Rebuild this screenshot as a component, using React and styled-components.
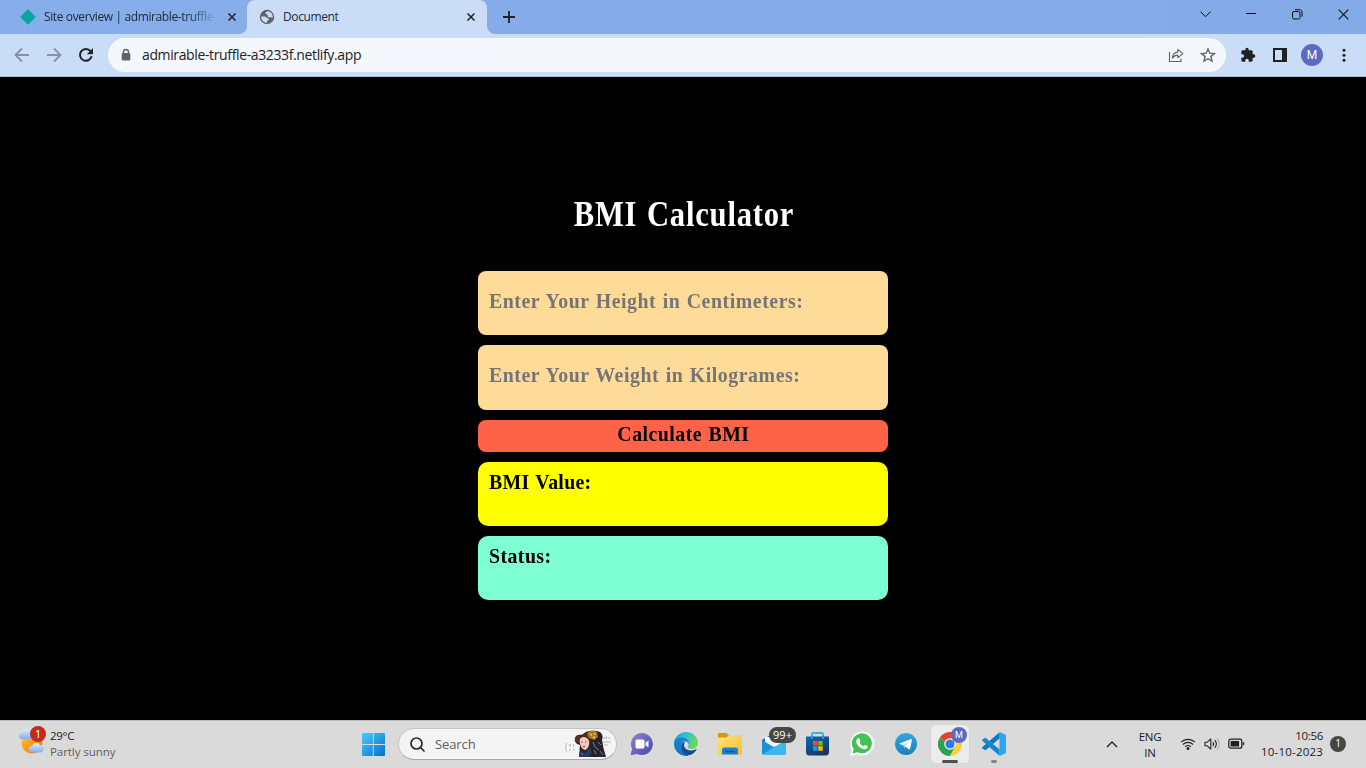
import React from "react";
import styled, { createGlobalStyle } from "styled-components";

const Global = createGlobalStyle`
  * { box-sizing: border-box; }
  html, body { margin: 0; padding: 0; }
  body { background: #000; overflow: hidden; font-family: "Open Sans", "Noto Sans", sans-serif; }
  svg { display: block; flex: none; }
`;

const Screen = styled.div`
  display: flex;
  flex-direction: column;
  width: 1366px;
  height: 768px;
  background: #000;
`;

/* Browser window */
const TabStrip = styled.header`
  display: flex;
  height: 34px;
  flex: none;
  background: linear-gradient(90deg, #87adea, #84aae7);
`;

const Tab = styled.div`
  display: flex;
  align-items: center;
  position: relative;
  width: ${(p) => (p.$active ? 240 : 247)}px;
  height: 34px;
  padding: 0 ${(p) => (p.$active ? 12 : 11)}px 0 ${(p) => (p.$active ? 12 : 20)}px;
  background: ${(p) => (p.$active ? "#cbdcf6" : "transparent")};
  border-radius: 8px 8px 0 0;
  &::before, &::after {
    content: "";
    display: ${(p) => (p.$active ? "block" : "none")};
    position: absolute;
    bottom: 0;
    width: 8px;
    height: 8px;
  }
  &::before { left: -8px; background: radial-gradient(circle at 0 0, transparent 7.6px, #cbdcf6 8.2px); }
  &::after { right: -8px; background: radial-gradient(circle at 100% 0, transparent 7.6px, #cbdcf6 8.2px); }
`;

const TabTitle = styled.span`
  flex: 1;
  margin-left: 8px;
  margin-right: ${(p) => (p.$fade ? 8 : 10)}px;
  white-space: nowrap;
  font-size: 12px;
  line-height: 18px;
  letter-spacing: -0.38px;
  color: #202b3c;
  mask-image: ${(p) => (p.$fade ? "linear-gradient(90deg, #000 145px, transparent 172px)" : "none")};
`;

const NewTab = styled.div`
  padding: 11px 0 0 16px;
`;

const WindowControls = styled.div`
  display: flex;
  align-items: center;
  height: 28px;
  margin-left: auto;
  div { width: 46px; display: flex; justify-content: center; }
`;

const Toolbar = styled.div`
  display: flex;
  align-items: center;
  flex: none;
  height: 43px;
  padding: 0 0 1px 14px;
  background: #cbdcf6;
  border-bottom: 1px solid #a9b9d4;
`;

const NavButtons = styled.div`
  display: flex;
  gap: 16px;
  width: 94px;
`;

const AddressBar = styled.div`
  display: flex;
  align-items: center;
  width: 1118px;
  height: 34px;
  padding: 0 10px 0 12px;
  border-radius: 17px;
  background: #f4f8fd;
`;

const Url = styled.span`
  flex: 1;
  margin-left: 10px;
  font-size: 14px;
  letter-spacing: -0.37px;
  line-height: 20px;
  color: #202124;
`;

const AddressActions = styled.div`
  display: flex;
  gap: 16px;
`;

const Extensions = styled.div`
  display: flex;
  align-items: center;
  gap: 17px;
  margin-left: 14px;
  > :last-child { margin-left: -1px; }
`;

const Avatar = styled.div`
  display: flex;
  align-items: center;
  justify-content: center;
  width: ${(p) => p.$size}px;
  height: ${(p) => p.$size}px;
  margin: 0 -3px;
  border-radius: 50%;
  background: #5c6bc0;
  color: #fff;
  font: ${(p) => (p.$size > 18 ? 12 : 9)}px Roboto, sans-serif;
`;

/* Calculator page */
const Page = styled.main`
  flex: 1;
  display: flex;
  flex-direction: column;
  align-items: center;
  padding-top: 114px;
  background: #000;
`;

const Heading = styled.h1`
  margin: 0 0 32px;
  padding-left: 3px;
  height: 48px;
  font: bold 35px/48px "Liberation Serif", serif;
  letter-spacing: 0.9px;
  word-spacing: 1.5px;
  color: #fff;
  transform: scaleX(0.874);
  white-space: nowrap;
`;

const Form = styled.section`
  display: flex;
  flex-direction: column;
  gap: 10px;
  width: 410px;
`;

const Block = styled.div`
  display: flex;
  justify-content: ${(p) => (p.$center ? "center" : "flex-start")};
  height: ${(p) => p.$height}px;
  padding: ${(p) => p.$top}px 11px 0;
  border-radius: ${(p) => p.$radius}px;
  background: ${(p) => p.$bg};
  color: ${(p) => p.$color || "#000"};
`;

const BlockText = styled.span`
  font: bold 22px/28px "Liberation Serif", serif;
  letter-spacing: ${(p) => p.$spacing || 0.5}px;
  word-spacing: 1px;
  white-space: nowrap;
  transform: scaleX(0.9);
  transform-origin: ${(p) => (p.$center ? "center" : "left")};
`;

/* Taskbar */
const Taskbar = styled.footer`
  display: flex;
  flex: none;
  height: 48px;
  background: #dadada;
  border-top: 1px solid #b9b9b9;
`;

const Weather = styled.div`
  display: flex;
  width: 351px;
  padding: 4px 0 0 18px;
`;

const WeatherIcon = styled.div`
  width: 32px;
`;

const Lines = styled.div`
  margin-top: ${(p) => p.$top || 0}px;
  font-size: 11.5px;
  line-height: 16px;
  letter-spacing: -0.3px;
  text-align: ${(p) => p.$align || "left"};
  color: #1b1b1b;
  white-space: nowrap;
  p { margin: 0; }
  p + p { color: ${(p) => p.$second || "#1b1b1b"}; letter-spacing: ${(p) => p.$ls || -0.3}px; }
`;

const Cell = styled.div`
  position: relative;
  display: flex;
  align-items: center;
  justify-content: center;
  width: 44px;
  height: 46px;
`;

const ActiveTile = styled.div`
  display: flex;
  align-items: center;
  justify-content: center;
  width: 38px;
  height: 38px;
  border-radius: 4px;
  background: #ececec;
  box-shadow: 0 0 1px #aaa;
`;

const RunningMark = styled.i`
  position: absolute;
  bottom: 4px;
  left: ${(p) => (p.$wide ? 14 : 19)}px;
  width: ${(p) => (p.$wide ? 16 : 6)}px;
  height: 3px;
  border-radius: 2px;
  background: ${(p) => (p.$wide ? "#505050" : "#858585")};
`;

const CountBadge = styled.span`
  position: absolute;
  top: 6px;
  left: 17px;
  width: 27px;
  height: 16px;
  border-radius: 8px;
  background: #484644;
  color: #fff;
  font-size: 11px;
  line-height: 16px;
  text-align: center;
`;

const ProfileBadge = styled.div`
  position: absolute;
  top: 6px;
  left: 26px;
`;

const SearchBox = styled.div`
  display: flex;
  align-items: center;
  width: 219px;
  height: 32px;
  margin: 7px 3px 0 3px;
  padding: 0 4px 0 11px;
  border: 1px solid #c4c4c4;
  border-bottom-color: #a8a8a8;
  border-radius: 16px;
  background: #f4f4f4;
  span { flex: 1; margin-left: 10px; font-size: 13px; letter-spacing: -0.1px; line-height: 20px; color: #5e5e5e; }
`;

const Tray = styled.div`
  display: flex;
  align-items: center;
  margin-left: auto;
  padding-right: 20px;
  height: 46px;
`;

const Language = styled.div`
  width: 40px;
  margin: 1px 10px 0 12px;
`;

const TrayIcons = styled.div`
  display: flex;
  align-items: center;
  gap: 8px;
  width: 81px;
`;

const Notice = styled.span`
  width: 16px;
  height: 16px;
  margin-left: 7px;
  border-radius: 50%;
  background: #484644;
  color: #fff;
  font-size: 10px;
  line-height: 15px;
  text-align: center;
`;

const Cross = ({ size = 8, w = 1.5, color = "#202124" }) => (
  <svg width={size} height={size} viewBox="0 0 8 8" stroke={color} strokeWidth={(w * 8) / size} fill="none">
    <path d="M.5.5l7 7M7.5.5l-7 7" />
  </svg>
);

const Globe = () => (
  <svg width="16" height="16" viewBox="0 0 16 16">
    <circle cx="8" cy="8" r="7.2" fill="#5f6368" />
    <path d="M2.2 7.400l3.600 0c1.600 0 1.500 1.800 3 1.800 .8 0 1 .6 1 1.300 0 1-1.700.8-1.700 1.800v1.400C4.800 13.700 2.200 11.200 2.200 7.400zM8.600 2.200c-1.600.5-2.300 1.500-2 2.500.3.900 1.700.5 2.100 1.200.4.8-.4 1.300.3 2 .8.800 2.100.1 2.900.5l1.900.2C14 5 11.800 2.500 8.600 2.200z" fill="#cbdcf6" />
  </svg>
);

const Back = ({ flip }) => (
  <svg width="16" height="16" viewBox="0 0 16 16" fill="none" stroke="#8290a8" strokeWidth="1.8">
    <path d={flip ? "M1 8h13.500M8 1.500L14.500 8 8 14.500" : "M15 8H1.500M8 1.500L1.500 8 8 14.500"} />
  </svg>
);

const Reload = () => (
  <svg width="16" height="16" viewBox="0 0 16 16">
    <path d="M13.600 9.300A5.900 5.900 0 1 1 12.500 4.200" fill="none" stroke="#202124" strokeWidth="2" />
    <path d="M15 1v6.200H8.800z" fill="#202124" />
  </svg>
);

const Lock = () => (
  <svg width="12" height="14" viewBox="0 0 12 14">
    <path d="M3.500 6V4a2.500 2.500 0 0 1 5 0v2" fill="none" stroke="#5f6368" strokeWidth="1.400" />
    <rect x="1.700" y="5" width="8.600" height="7.500" rx="1" fill="#5f6368" />
  </svg>
);

const Share = () => (
  <svg width="16" height="16" viewBox="0 0 16 16" fill="none" stroke="#5f6368" strokeWidth="1.100">
    <path d="M1.500 5v9.500h11.500V11.500" />
    <path d="M4.300 11.200c.2-3.700 2-5.800 5.500-6.100V2.400L14.900 6.600 9.800 10.700V8.100c-2.600 0-4.300 1-5.500 3.100z" strokeLinejoin="round" />
  </svg>
);

const Star = () => (
  <svg width="16" height="16" viewBox="0 0 16 16" fill="none" stroke="#5f6368" strokeWidth="1.400">
    <path d="M8 2l1.800 4.200 4.600.4-3.500 3 1.100 4.500L8 11.700l-4 2.400 1.100-4.500-3.500-3 4.600-.4z" />
  </svg>
);

const Puzzle = () => (
  <svg width="16" height="16" viewBox="0 0 24 24" fill="#202124">
    <path d="M20.500 11H19V7a2 2 0 0 0-2-2h-4V3.500a2.500 2.500 0 0 0-5 0V5H4a2 2 0 0 0-2 2v3.800h1.500a2.700 2.700 0 0 1 0 5.400H2V20a2 2 0 0 0 2 2h3.800v-1.500a2.700 2.700 0 0 1 5.400 0V22H17a2 2 0 0 0 2-2v-4h1.500a2.500 2.500 0 0 0 0-5z" />
  </svg>
);

const SidePanel = () => (
  <svg width="14" height="14" viewBox="0 0 14 14">
    <rect x="1" y="1" width="12" height="12" fill="none" stroke="#202124" strokeWidth="2" />
    <path d="M9 1h4v12H9z" fill="#202124" />
  </svg>
);

const Menu = () => (
  <svg width="16" height="16" viewBox="0 0 16 16" fill="#202124">
    <circle cx="8" cy="3.200" r="1.500" /><circle cx="8" cy="8.200" r="1.500" /><circle cx="8" cy="13.200" r="1.500" />
  </svg>
);

const WeatherArt = () => (
  <svg width="30" height="30" viewBox="0 0 30 30">
    <defs>
      <linearGradient id="sun" x2="1" y2="1"><stop stopColor="#ffca32" /><stop offset="1" stopColor="#f36c10" /></linearGradient>
      <linearGradient id="cloud" x2="0" y2="1"><stop stopColor="#dceeff" /><stop offset="1" stopColor="#83aee6" /></linearGradient>
    </defs>
    <circle cx="14" cy="18" r="10.500" fill="url(#sun)" />
    <path d="M4 14a3 3 0 0 1 0-6 5 5 0 0 1 9-2 4 4 0 0 1 3 8z" fill="url(#cloud)" />
    <path d="M14 27.500a3.200 3.200 0 0 1 0-6.400 4.500 4.500 0 0 1 8-1.200 3.900 3.900 0 0 1 1 7.600z" fill="url(#cloud)" />
    <circle cx="20" cy="9" r="8" fill="#c42b1c" />
    <text x="20" y="13" fill="#fff" fontSize="11.500" textAnchor="middle" fontFamily="Open Sans">1</text>
  </svg>
);

const WindowsLogo = () => (
  <svg width="24" height="24" viewBox="0 0 24 24">
    <defs><linearGradient id="win" x2="1" y2="1"><stop stopColor="#4ccbfb" /><stop offset="1" stopColor="#0470cc" /></linearGradient></defs>
    <path d="M2 1h9.800v11H1V2a1 1 0 0 1 1-1zM12.700 1H23a1 1 0 0 1 1 1v10H12.700zM1 12.900h10.800V24H2a1 1 0 0 1-1-1zM12.700 12.900H24V23a1 1 0 0 1-1 1H12.700z" fill="url(#win)" />
  </svg>
);

const Portrait = () => (
  <svg width="49" height="28" viewBox="0 0 49 28">
    <g fill="none" stroke="#b3b3b3" strokeWidth=".9">
      <path d="M4 13c-2 0 0 4-2 4 2 0 0 4.500 2 4.500M6 15h2M7 14v3M6 20h2M10.500 14v3M10 19.500h2M40 8h3M43.500 6v3M45 8h2M40 12h8M41 15h4" />
    </g>
    <path d="M12 8c1-3 4-4 7-3 3-4 9-5 14-4 5 0 8 4 6 9 1 4 1 7 2 10l2 7H16l1-12c-4-1-6-4-5-7z" fill="#272329" />
    <path d="M12 9c0-3 3-5 6-3l-1 7c-3 0-5-1-5-4z" fill="#57301f" />
    <path d="M17 9c2-4 8-4 9 1 1 5-1 9-4 10-4-1-6-7-5-11z" fill="#f3c9ba" />
    <path d="M16 9c1-5 8-7 12-4l-1 8-2-4c-4-3-6-2-9 0z" fill="#4b2b1c" />
    <path d="M24 4c1-4 7-4 10-2l1 5-4 3-5-2z" fill="#a87725" />
    <path d="M17 21l5 2 5-5 2 5-3 4H16z" fill="#273a68" />
    <path d="M27 4l2 1M31 3l1 2M30 7l2 1" stroke="#f1cc62" strokeWidth="1.500" />
    <path d="M30 12l2 5 4 3M31 20l2 4M35 12l3 3M37 21l3 4M18 23l2 2" stroke="#777a94" strokeWidth="1" fill="none" />
    <path d="M18 12h1.500M22 12h1.500" stroke="#6b3d34" strokeWidth=".9" />
    <path d="M20 16.500h2.200" stroke="#d6283c" strokeWidth="1.200" />
  </svg>
);

const Chat = () => (
  <svg width="24" height="24" viewBox="0 0 24 24">
    <defs><linearGradient id="chat" x2="1" y2="1"><stop stopColor="#9584cf" /><stop offset=".6" stopColor="#6360bd" /><stop offset="1" stopColor="#4246a8" /></linearGradient></defs>
    <path d="M12 1a11 11 0 1 1-5 20.900L1.300 23c-.5 0-.8-.5-.6-1l1.400-5A11 11 0 0 1 12 1z" fill="url(#chat)" />
    <rect x="5.500" y="7.500" width="9" height="9" rx="1.600" fill="#fff" />
    <path d="M15.500 10.700l3-2.300v7.200l-3-2.300z" fill="#fff" />
  </svg>
);

const Edge = () => (
  <svg width="24" height="24" viewBox="0 0 24 24">
    <defs>
      <linearGradient id="edgeA" x2="1" y2=".25"><stop stopColor="#249bdc" /><stop offset=".5" stopColor="#32bdd8" /><stop offset="1" stopColor="#6cd75c" /></linearGradient>
      <linearGradient id="edgeB" x2="0" y2="1"><stop stopColor="#1687d2" /><stop offset="1" stopColor="#1572bd" /></linearGradient>
    </defs>
    <path d="M0 12C0 5 5.500 0 12 0c7 0 12 5 12 10.500 0 4-3 6.500-6.500 6.500-3 0-4.500-1.200-3.500-2.400 1-1 1-5.600-4-5.600-5 0-9 1-10 3z" fill="url(#edgeA)" />
    <path d="M0 12C.2 7.500 4 5.500 7.800 5.500c4.700 0 7.500 3.500 7.200 6.500-.5-1.500-2-3-4.600-2.900C6 10 6 19 13.500 21.500L14 24C6 24.700 0 19 0 12z" fill="url(#edgeB)" />
    <path d="M8.500 10.500C5 16 9 23.500 15 23.300c3.500-.8 6-3 7.500-5.600.2-.5-.2-.8-.6-.5C16 20 10 17.500 10 13c0-1.400.5-2.500 1.400-3.500-1 0-2 .2-2.900 1z" fill="#174b91" />
  </svg>
);

const Explorer = () => (
  <svg width="26" height="24" viewBox="0 0 26 24">
    <defs><linearGradient id="fold" x2="1" y2="1"><stop stopColor="#ffe181" /><stop offset="1" stopColor="#fbc02c" /></linearGradient></defs>
    <path d="M2 1h7.500l2.200 2H24a1 1 0 0 1 1 1v7H1V2a1 1 0 0 1 1-1z" fill="#d7960c" />
    <path d="M1 5.500h8.500L12 3h12a1 1 0 0 1 1 1v17.500a1 1 0 0 1-1 1H2a1 1 0 0 1-1-1z" fill="url(#fold)" />
    <path d="M5 22.500V18a2.500 2.500 0 0 1 2.500-2.500h11A2.500 2.500 0 0 1 21 18v4.500z" fill="#1680d4" />
    <path d="M9 19.500h8" stroke="#0a4f91" strokeWidth="1.500" strokeLinecap="round" />
  </svg>
);

const Mail = () => (
  <svg width="26" height="24" viewBox="0 0 26 24">
    <path d="M1 8l12-7 12 7v3H1z" fill="#1868ac" />
    <path d="M4 5h18v9H4z" fill="#f4f7fa" />
    <path d="M1 8l24 14.500H2a1 1 0 0 1-1-1z" fill="#1c90dc" />
    <path d="M25 8L1 22.500h23a1 1 0 0 0 1-1z" fill="#37b8ef" />
  </svg>
);

const Store = () => (
  <svg width="24" height="26" viewBox="0 0 24 26">
    <defs><linearGradient id="store" x2=".5" y2="1"><stop stopColor="#0d69b8" /><stop offset="1" stopColor="#173963" /></linearGradient></defs>
    <path d="M6 8V3.200C6 2.500 6.500 2 7.200 2h8.600c.7 0 1.200.5 1.200 1.200V8" stroke="#36b7ec" strokeWidth="2" fill="none" />
    <path d="M0 5.500h23V21a3.500 3.500 0 0 1-3.500 3.500h-16A3.500 3.500 0 0 1 0 21z" fill="url(#store)" />
    <path d="M7 10h4.500v4.500H7z" fill="#f25022" /><path d="M12.200 10h4.500v4.500h-4.500z" fill="#7fba00" />
    <path d="M7 15.200h4.500v4.500H7z" fill="#00a4ef" /><path d="M12.200 15.200h4.500v4.500h-4.500z" fill="#ffb900" />
    <path d="M5 6v1.500h2V6M16 6v1.500h2V6" fill="#35aee4" />
  </svg>
);

const WhatsApp = () => (
  <svg width="26" height="26" viewBox="0 0 26 26">
    <path d="M1 25l1.800-6.700A12 12 0 1 1 8 23.300z" fill="#fff" />
    <path d="M3.500 22.500l1.200-4.400A10 10 0 1 1 8.500 21.300z" fill="#42c254" />
    <path d="M9 7.300c.5-.3 1.200-.2 1.500.4l.9 2c.2.500-.8 1.500-.8 1.800.8 1.700 2 2.800 3.800 3.600.5.1 1.200-1.300 1.700-1.200l2.300 1.100c.4.200.3 1.100.1 1.500-.8 1.800-2.700 2-4.400 1.400-3.300-1.100-5.700-3.500-6.700-6.200-.5-1.700.2-3.700 1.600-4.400z" fill="#fff" />
  </svg>
);

const Telegram = () => (
  <svg width="22" height="22" viewBox="0 0 22 22">
    <defs><linearGradient id="tele" x2="0" y2="1"><stop stopColor="#36a8de" /><stop offset="1" stopColor="#1981bc" /></linearGradient></defs>
    <circle cx="11" cy="11" r="11" fill="url(#tele)" />
    <path d="M4 10.700L16 6.100c.6-.2 1 .1.900.8l-1.800 8.900c-.2.700-.7.800-1.200.4l-5.200-3.700z" fill="#fff" />
    <path d="M8.200 12.500L14.500 8l-4.700 5.300-.2 2.800z" fill="#a9d3e9" />
  </svg>
);

const Chrome = () => (
  <svg width="24" height="24" viewBox="0 0 24 24">
    <path d="M12 12L1.600 6a12 12 0 0 1 20.800 0z" fill="#df4334" />
    <path d="M12 12L1.600 6A12 12 0 0 0 12 24l5.200-9z" fill="#2da24d" />
    <path d="M12 6.200h10.500A12 12 0 0 1 12 24l5-9z" fill="#fdcf3b" />
    <circle cx="12" cy="12" r="5.800" fill="#fff" /><circle cx="12" cy="12" r="4.600" fill="#3478e9" />
  </svg>
);

const VSCode = () => (
  <svg width="24" height="24" viewBox="0 0 24 24">
    <path d="M17.500 0L24 3v18l-6.500 3z" fill="#30a4ed" />
    <path d="M17.500.2v6.400L3.500 18.200.2 16.500v-1.300z" fill="#087bc8" />
    <path d="M.2 8.800v-1.300l3.300-1.700 14 11.600v6.400z" fill="#1685ce" />
  </svg>
);

const WifiIcon = () => (
  <svg width="16" height="14" viewBox="0 0 16 14" fill="none" stroke="#252525" strokeWidth="1.100">
    <path d="M1 5.200a10 10 0 0 1 14 0M3 7.500a7 7 0 0 1 10 0M5.200 9.800a4 4 0 0 1 5.600 0" />
    <circle cx="8" cy="11.500" r="1" fill="#252525" />
  </svg>
);

const Speaker = () => (
  <svg width="16" height="14" viewBox="0 0 16 14" fill="none" stroke="#252525" strokeWidth="1.100" strokeLinejoin="round">
    <path d="M1 5.200h2.200L6.800 2v10L3.200 8.800H1zM8.800 5a3 3 0 0 1 0 4M10.800 3.200a6 6 0 0 1 0 7.600" />
    <path d="M13 1.500a8 8 0 0 1 0 11" stroke="#b0b0b0" />
  </svg>
);

const Battery = () => (
  <svg width="17" height="12" viewBox="0 0 17 12">
    <rect x=".8" y="1.200" width="13" height="9" rx="2" fill="none" stroke="#202020" strokeWidth="1.200" />
    <rect x="2.600" y="3" width="8.500" height="5.500" rx=".5" fill="#202020" />
    <path d="M15 4.200v3c1 0 1.300-3 0-3z" fill="#202020" stroke="#202020" strokeWidth=".7" />
  </svg>
);

const FIELDS = [
  { text: "Enter Your Height in Centimeters:", height: 64, top: 16, radius: 8, bg: "#ffdb99", color: "#757575", spacing: 0.63 },
  { text: "Enter Your Weight in Kilogrames:", height: 65, top: 16, radius: 8, bg: "#ffdb99", color: "#757575", spacing: 0.63 },
  { text: "Calculate BMI", height: 32, top: 0, radius: 8, bg: "#ff6347", center: true, spacing: 0.55 },
  { text: "BMI Value:", height: 64, top: 6, radius: 10, bg: "#ffff00", spacing: 0.35 },
  { text: "Status:", height: 64, top: 6, radius: 10, bg: "#7fffd4" },
];

export default function App() {
  return (
    <Screen>
      <Global />
      <TabStrip>
        <Tab>
          <svg width="16" height="16" viewBox="0 0 16 16"><path d="M8 .3L15.700 8 8 15.700.3 8z" fill="#05a69d" /></svg>
          <TabTitle $fade>Site overview | admirable-truffle-</TabTitle>
          <Cross />
        </Tab>
        <Tab $active>
          <Globe />
          <TabTitle>Document</TabTitle>
          <Cross />
        </Tab>
        <NewTab>
          <svg width="12" height="12" viewBox="0 0 12 12" stroke="#202124" strokeWidth="1.800"><path d="M6 0v12M0 6h12" /></svg>
        </NewTab>
        <WindowControls>
          <div><svg width="11" height="7" viewBox="0 0 11 7" fill="none" stroke="#111" strokeWidth="1"><path d="M.5.7l5 5 5-5" /></svg></div>
          <div><svg width="10" height="2" viewBox="0 0 10 2"><path d="M0 0h10v1H0z" fill="#111" /></svg></div>
          <div>
            <svg width="11" height="11" viewBox="0 0 11 11" fill="none" stroke="#111">
              <rect x=".5" y="2.500" width="7.500" height="7.500" rx="1.500" /><path d="M3 .7h4.500c1.500 0 2.500 1 2.500 2.500v4.500" />
            </svg>
          </div>
          <div><Cross size={11} w={1.1} color="#111" /></div>
        </WindowControls>
      </TabStrip>

      <Toolbar>
        <NavButtons><Back /><Back flip /><Reload /></NavButtons>
        <AddressBar>
          <Lock />
          <Url>admirable-truffle-a3233f.netlify.app</Url>
          <AddressActions><Share /><Star /></AddressActions>
        </AddressBar>
        <Extensions><Puzzle /><SidePanel /><Avatar $size={22}>M</Avatar><Menu /></Extensions>
      </Toolbar>

      <Page>
        <Heading>BMI Calculator</Heading>
        <Form>
          {FIELDS.map((f) => (
            <Block key={f.text} $height={f.height} $top={f.top} $radius={f.radius} $bg={f.bg} $color={f.color} $center={f.center}>
              <BlockText $center={f.center} $spacing={f.spacing}>{f.text}</BlockText>
            </Block>
          ))}
        </Form>
      </Page>

      <Taskbar>
        <Weather>
          <WeatherIcon><WeatherArt /></WeatherIcon>
          <Lines $second="#5f5f5f" $top={3} $ls={-0.07}><p>29°C</p><p>Partly sunny</p></Lines>
        </Weather>
        <Cell><WindowsLogo /></Cell>
        <SearchBox>
          <svg width="15" height="15" viewBox="0 0 15 15" fill="none" stroke="#292929" strokeWidth="1.700" strokeLinecap="round">
            <circle cx="6.500" cy="6.500" r="5.500" /><path d="M10.500 10.500l3.500 3.500" />
          </svg>
          <span>Search</span>
          <Portrait />
        </SearchBox>
        <Cell><Chat /></Cell>
        <Cell><Edge /></Cell>
        <Cell><Explorer /></Cell>
        <Cell><Mail /><CountBadge>99+</CountBadge></Cell>
        <Cell><Store /></Cell>
        <Cell><WhatsApp /></Cell>
        <Cell><Telegram /></Cell>
        <Cell>
          <ActiveTile><Chrome /></ActiveTile>
          <ProfileBadge><Avatar $size={16}>M</Avatar></ProfileBadge>
          <RunningMark $wide />
        </Cell>
        <Cell><VSCode /><RunningMark /></Cell>
        <Tray>
          <svg width="12" height="7" viewBox="0 0 12 7" fill="none" stroke="#202020" strokeWidth="1.300"><path d="M1 6l5-5 5 5" /></svg>
          <Language><Lines $align="center"><p>ENG</p><p>IN</p></Lines></Language>
          <TrayIcons><WifiIcon /><Speaker /><Battery /></TrayIcons>
          <Lines $align="right" $ls={0.2}><p>10:56</p><p>10-10-2023</p></Lines>
          <Notice>1</Notice>
        </Tray>
      </Taskbar>
    </Screen>
  );
}
